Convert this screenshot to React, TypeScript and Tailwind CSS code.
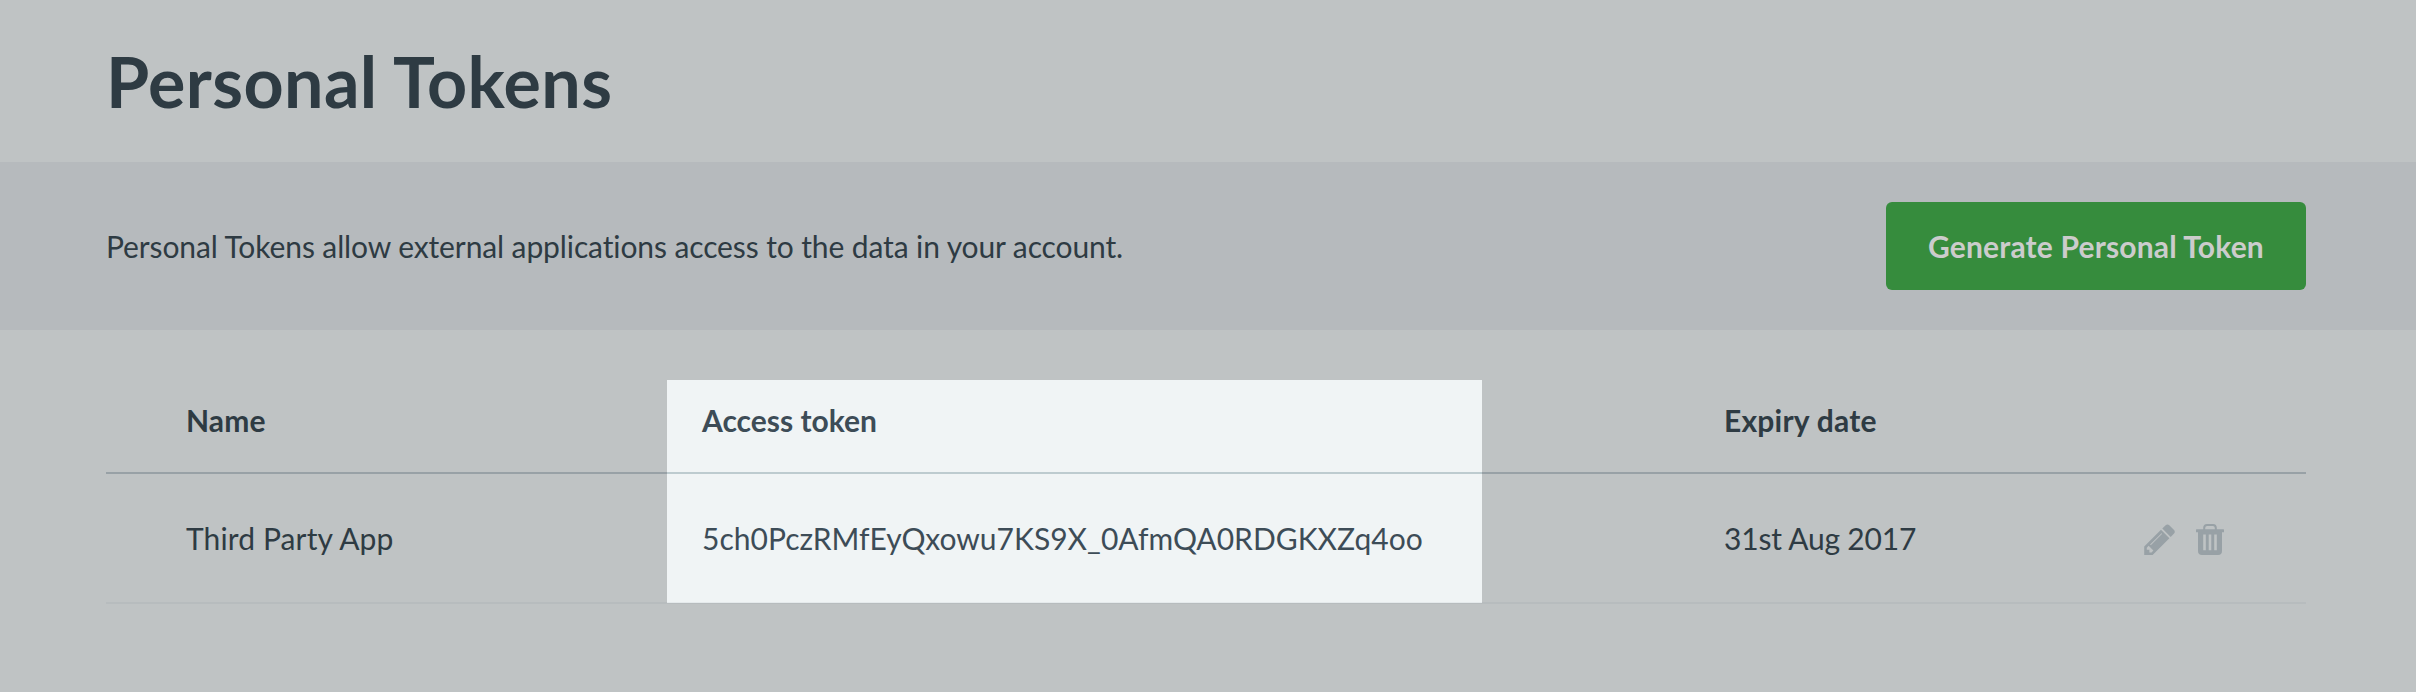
const PENCIL =
  "M491 1536l91-91-235-235-91 91v107h128v128h107zm523-928q0-22-22-22-10 0-17 7l-542 542q-7 7-7 17 0 22 22 22 10 0 17-7l542-542q7-7 7-17zm-54-192l416 416-832 832h-416v-416zm683 96q0 53-37 90l-166 166-416-416 166-165q36-38 90-38 53 0 91 38l235 234q37 39 37 91z";

function PencilIcon() {
  return (
    <svg viewBox="128 128 1515 1536" className="h-[31px] w-[31px]" fill="currentColor">
      <path d={PENCIL} />
    </svg>
  );
}

function TrashIcon() {
  return (
    <svg viewBox="0 0 28 31" className="h-[31px] w-7" fill="currentColor" fillRule="evenodd">
      <path d="M0.500 5.300H7.200V3.800A3.800 3.800 0 0 1 11 0h6a3.800 3.800 0 0 1 3.800 3.800V5.300H27.500a0.500 0.500 0 0 1 .5 .5V8.300H26V27a4 4 0 0 1-4 4H6a4 4 0 0 1-4-4V8.300H0V5.800a0.500 0.500 0 0 1 .5-.5zM9.200 5.300h9.600V4A2 2 0 0 0 16.800 2h-5.600A2 2 0 0 0 9.200 4zM7.200 10.500V26.300H9.800V10.500zM12.700 10.500V26.300h2.600V10.500zM18.200 10.500V26.300h2.600V10.500z" />
    </svg>
  );
}

export default function App() {
  return (
    <main className="flex h-[692px] w-[2416px] flex-col bg-[#bfc3c4] font-['Lato',sans-serif] text-[30px] leading-9 text-[#2e3b43]">
      <header className="flex h-[162px] items-center px-[106px]">
        <h1 className="text-[70px] leading-[84px] font-bold tracking-[0.4px]">Personal Tokens</h1>
      </header>
      <section className="flex h-[168px] items-center justify-between bg-[#b6babd] pr-[110px] pl-[106px]">
        <p className="tracking-[-0.11px]">Personal Tokens allow external applications access to the data in your account.</p>
        <button className="flex h-[88px] w-[420px] items-center justify-center rounded-md bg-[#368c3d] font-bold tracking-[0.16px] text-[#cccccc]">
          Generate Personal Token
        </button>
      </section>
      <section className="mr-[110px] ml-[106px] mt-[50px] grid grid-cols-[561px_815px_824px]">
        <div className="flex h-[94px] items-center border-b-2 border-[#98a1a6] pb-3 pl-20 font-bold tracking-[0.1px]">Name</div>
        <div className="flex h-[94px] items-center border-b-2 border-[#bdcbcf] bg-[#f0f4f5] pb-3 pl-[35px] font-bold text-[#3d4c57]">Access token</div>
        <div className="flex h-[94px] items-center border-b-2 border-[#98a1a6] pb-3 pl-[242px] font-bold tracking-[0.22px]">Expiry date</div>
        <div className="flex h-[130px] items-center border-b-2 border-[#b7bcbe] pl-20 tracking-[0.12px]">Third Party App</div>
        <div className="flex h-[130px] flex-col text-[#3d4c57]">
          <div className="flex h-32 items-center bg-[#f0f4f5] pl-[35px] tracking-[0.02px]">5ch0PczRMfEyQxowu7KS9X_0AfmQA0RDGKXZq4oo</div>
          <div className="h-px bg-[#e5eaec]" />
          <div className="h-px bg-[#b7bcbe]" />
        </div>
        <div className="flex h-[130px] items-center justify-between border-b-2 border-[#b7bcbe] pr-[82px] pl-[242px]">
          <span className="tracking-[-0.2px]">31st Aug 2017</span>
          <span className="flex items-center gap-[21px] pt-[3px] text-[#98a1a6]">
            <PencilIcon />
            <TrashIcon />
          </span>
        </div>
      </section>
    </main>
  );
}
